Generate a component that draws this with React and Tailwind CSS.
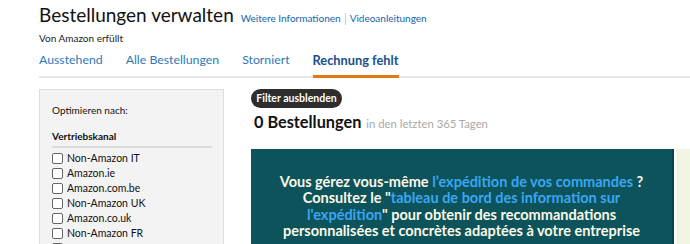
const channels = [
  "Non-Amazon IT",
  "Amazon.ie",
  "Amazon.com.be",
  "Non-Amazon UK",
  "Amazon.co.uk",
  "Non-Amazon FR",
  "Non-Amazon DE",
];

const tabs = ["Ausstehend", "Alle Bestellungen", "Storniert", "Rechnung fehlt"];

const App = () => {
  return (
    <div className="h-[244px] w-[690px] overflow-hidden bg-white font-['Lato','Liberation_Sans',sans-serif] text-[#111]">
      <div className="pl-[39px] pt-[3px]">
        <div className="flex items-baseline gap-[7px]">
          <h1 className="text-[19px] leading-[24px] font-normal text-[#111]">Bestellungen verwalten</h1>
          <div className="flex items-baseline text-[10px] text-[#0f66b0]">
            <span>Weitere Informationen</span>
            <span className="mx-[4px] h-[12px] w-px self-center bg-[#ccc]" />
            <span>Videoanleitungen</span>
          </div>
        </div>
        <p className="mt-[4px] text-[10px] leading-[14px] text-[#222]">Von Amazon erfüllt</p>

        <div className="mt-[6px] flex items-end border-b-2 border-[#e7e7e7]">
          {tabs.map((t, i) => (
            <div
              key={t}
              className={
                i === 3
                  ? "mr-[23px] -mb-[2px] border-b-[3px] border-[#e47911] pb-[6px] text-[12.8px] font-bold leading-[18px] text-[#1a4f8a]"
                  : "mr-[23px] pb-[7px] text-[12.3px] leading-[18px] text-[#2d79b9]"
              }
            >
              {t}
            </div>
          ))}
        </div>

        <div className="mt-[11px] flex">
          <aside className="h-[170px] w-[185px] shrink-0 border border-[#ddd] bg-[#f3f3f3] px-[12px] pt-[13px]">
            <p className="text-[10px] leading-[14px] text-[#111]">Optimieren nach:</p>
            <p className="mt-[12px] text-[10px] font-bold leading-[14px] text-[#111]">Vertriebskanal</p>
            <div className="mt-[3px] h-[2px] w-[160px] bg-[#dcdcdc]" />
            <ul className="mt-[3px]">
              {channels.map((c) => (
                <li key={c} className="flex h-[15px] items-center gap-[4px] text-[10.5px] text-[#111]">
                  <span className="h-[11px] w-[11px] rounded-[2px] border border-[#666] bg-white" />
                  {c}
                </li>
              ))}
            </ul>
          </aside>

          <main className="ml-[27px] flex w-[423px] shrink-0 flex-col">
            <button className="h-[19px] w-[91px] rounded-full bg-[#2e2e2e] text-[10.5px] font-bold text-white">
              Filter ausblenden
            </button>
            <div className="mt-[4px] flex items-baseline gap-[5px] pl-[3px]">
              <span className="text-[16.3px] font-bold leading-[20px] text-[#111]">0 Bestellungen</span>
              <span className="text-[11.3px] text-[#a8a8a8]">in den letzten 365 Tagen</span>
            </div>
            <div className="mt-[16px] h-[120px] border-r-2 border-[#07434a] bg-[#0c535b] px-[20px] pt-[25px] text-center text-[14.5px] font-bold leading-[16.5px] text-[#fbf8e6]">
              Vous gérez vous-même <span className="text-[#3aa6f2]">l’expédition de vos commandes</span> ?
              <br />
              Consultez le "<span className="text-[#3aa6f2]">tableau de bord des information sur l'expédition</span>" pour obtenir des recommandations personnalisées et concrètes adaptées à votre entreprise
            </div>
          </main>
          <div className="ml-[2px] mt-[60px] h-[120px] flex-1 bg-[#f3f5e4]" />
        </div>
      </div>
    </div>
  );
};

export default App;
